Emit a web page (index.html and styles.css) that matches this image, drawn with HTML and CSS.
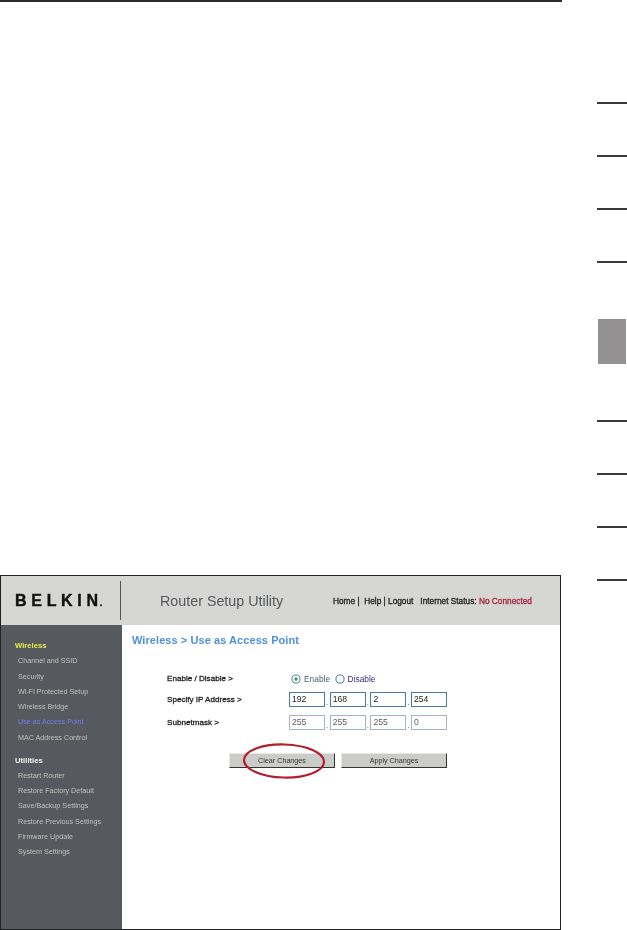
FILE: index.html
```html
<!DOCTYPE html>
<html lang="en">
<head>
<meta charset="utf-8">
<title>Router Setup Utility</title>
<link rel="stylesheet" href="styles.css">
</head>
<body>
<div class="page">
  <div class="top-rule"></div>
  <div class="tabs">
    <div class="tab-group">
      <div class="tab-line"></div><div class="tab-line"></div><div class="tab-line"></div><div class="tab-line"></div>
    </div>
    <div class="tab-active"></div>
    <div class="tab-group lower">
      <div class="tab-line"></div><div class="tab-line"></div><div class="tab-line"></div><div class="tab-line"></div>
    </div>
  </div>
  <div class="shot">
    <header class="head">
      <div class="logo">BELKI<span class="last">N</span><span class="dot">.</span></div>
      <div class="divider"></div>
      <div class="title">Router Setup Utility</div>
      <div class="links">Home |&nbsp; Help | Logout &nbsp; Internet Status: <span class="status">No Connected</span></div>
    </header>
    <div class="body">
      <nav class="side">
        <div class="side-h yellow">Wireless</div>
        <div class="side-i">Channel and SSID</div>
        <div class="side-i">Security</div>
        <div class="side-i">Wi-Fi Protected Setup</div>
        <div class="side-i">Wireless Bridge</div>
        <div class="side-i current">Use as Access Point</div>
        <div class="side-i">MAC Address Control</div>
        <div class="side-h white">Utilities</div>
        <div class="side-i">Restart Router</div>
        <div class="side-i">Restore Factory Default</div>
        <div class="side-i">Save/Backup Settings</div>
        <div class="side-i">Restore Previous Settings</div>
        <div class="side-i">Firmware Update</div>
        <div class="side-i">System Settings</div>
      </nav>
      <main class="content">
        <h1 class="crumb">Wireless &gt; Use as Access Point</h1>
        <div class="form">
          <div class="row r1">
            <div class="label">Enable / Disable &gt;</div>
            <div class="radios">
              <svg class="radio" viewBox="0 0 11 11"><circle cx="5.5" cy="5.5" r="4.5" fill="#f4f8fb" stroke="#4d7190"/><circle cx="5.5" cy="5.5" r="1.8" fill="#3f9f5a"/></svg>
              <span class="radio-t enable">Enable</span>
              <svg class="radio" viewBox="0 0 11 11"><circle cx="5.5" cy="5.5" r="4.5" fill="#f4f8fb" stroke="#4d7190"/></svg>
              <span class="radio-t">Disable</span>
            </div>
          </div>
          <div class="row r2">
            <div class="label">Specify IP Address &gt;</div>
            <div class="ip strong">
              <span class="box">192</span><i>.</i><span class="box">168</span><i>.</i><span class="box">2</span><i>.</i><span class="box">254</span>
            </div>
          </div>
          <div class="row r3">
            <div class="label">Subnetmask &gt;</div>
            <div class="ip">
              <span class="box">255</span><i>.</i><span class="box">255</span><i>.</i><span class="box">255</span><i>.</i><span class="box">0</span>
            </div>
          </div>
          <div class="actions">
            <div class="btn">Clear Changes
              <svg class="ring" viewBox="0 0 84 36"><ellipse cx="42" cy="18" rx="40" ry="16.5" fill="none" stroke="#b01f2a" stroke-width="2.2" transform="rotate(1.5 42 18)"/></svg>
            </div>
            <div class="btn">Apply Changes</div>
          </div>
        </div>
      </main>
    </div>
  </div>
</div>
</body>
</html>
```
FILE: styles.css
```css
* { box-sizing: border-box; }
html, body { margin: 0; padding: 0; background: #fff; }
.page { position: relative; width: 627px; height: 930px; overflow: hidden; font-family: "Liberation Sans", Arial, sans-serif; }
.top-rule { width: 562px; height: 2px; background: #2a2a2a; }
.tabs { position: absolute; left: 597px; top: 0; width: 30px; }
.tab-group { padding-top: 102px; display: flex; flex-direction: column; gap: 51px; }
.tab-group.lower { padding-top: 56px; }
.tab-line { height: 2px; background: #3a3a3a; }
.tab-active { width: 28px; height: 45px; margin: 56px 0 0 1px; background: #939191; }
.shot { position: absolute; left: 0; top: 575px; width: 561px; height: 355px; border: 1px solid #222; display: flex; flex-direction: column; background: #fff; filter: blur(0.35px); }
.head { height: 49px; background: #d6d6d4; display: flex; align-items: center; flex: none; }
.logo { width: 105px; margin-left: 14px; font-weight: bold; font-size: 16px; letter-spacing: 4.7px; color: #111; white-space: nowrap; -webkit-text-stroke: 0.4px #111; }
.last { letter-spacing: 1.8px; }
.dot { font-size: 9px; letter-spacing: 0; }
.divider { width: 1px; height: 39px; background: #555; }
.title { margin-left: 39px; width: 173px; font-size: 14.3px; color: #55585c; white-space: nowrap; }
.links { font-size: 8.3px; color: #222; white-space: nowrap; -webkit-text-stroke: 0.3px #222; }
.status { color: #a8243e; -webkit-text-stroke: 0.3px #a8243e; }
.body { flex: 1; display: flex; min-height: 0; }
.side { width: 121px; background: #56595d; padding-top: 13px; font-size: 7.2px; flex: none; }
.side-h { height: 15.3px; line-height: 15.3px; padding-left: 14px; font-weight: bold; font-size: 7.7px; }
.yellow { color: #e8e84a; }
.white { color: #f0f0f0; margin-top: 7.5px; }
.side-i { height: 15.3px; line-height: 15.3px; padding-left: 17px; color: #c2c0bd; white-space: nowrap; }
.side-i.current { color: #6f7fe8; }
.content { flex: 1; min-width: 0; }
.crumb { margin: 0 0 0 10px; padding-top: 8px; font-size: 11px; font-weight: bold; color: #4f8fdc; letter-spacing: 0.07px; height: 22px; line-height: 14px; white-space: nowrap; }
.form { padding-top: 24px; padding-left: 45px; }
.row { display: flex; align-items: center; height: 15px; }
.label { width: 122px; font-size: 8.1px; color: #222; -webkit-text-stroke: 0.3px #222; white-space: nowrap; }
.r2 { margin-top: 6px; }
.r3 { margin-top: 8px; }
.radios { display: flex; align-items: center; margin-left: 2px; font-size: 8.4px; color: #3d2a7a; }
.radio { width: 10px; height: 10px; }
.radio-t { margin: 0 4.5px 0 3px; }
.radio-t.enable { color: #4a5f78; }
.ip { display: flex; align-items: flex-end; }
.box { width: 36px; height: 15px; border: 1px solid #a3b5c8; background: #fff; padding-left: 2px; font-size: 8.6px; line-height: 13px; color: #5a5a5a; }
.ip.strong .box { border-color: #4a78a8; color: #222; }
.ip i { width: 4.7px; font-style: normal; font-size: 8px; line-height: 8px; color: #446; padding-left: 1px; }
.actions { display: flex; gap: 6px; margin-top: 23px; margin-left: 62px; }
.btn { position: relative; width: 106px; height: 15px; background: #cbcbc9; border-top: 1px solid #e8e8e8; border-left: 1px solid #e8e8e8; border-right: 1px solid #333; border-bottom: 1px solid #333; text-align: center; font-size: 7.2px; line-height: 13px; color: #333; }
.ring { position: absolute; left: 11.5px; top: -11.5px; width: 84px; height: 36px; overflow: visible; }
```
